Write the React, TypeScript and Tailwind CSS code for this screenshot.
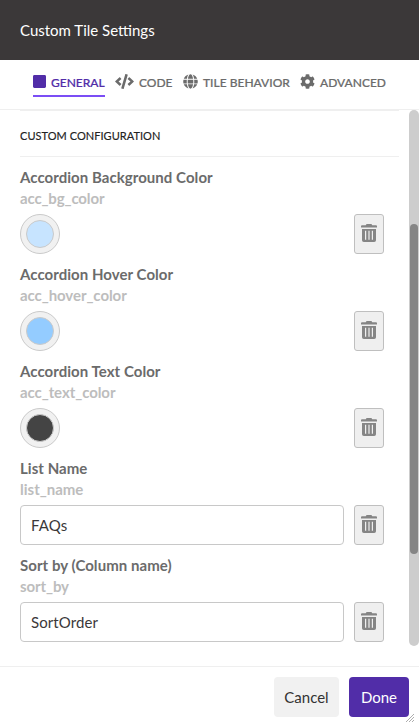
import React from "react";
import { FaCode, FaCog, FaGlobe, FaSquare } from "react-icons/fa";

type Field = { label: string; name: string; nameSpacing: string; swatch?: string; value?: string };

const fields: Field[] = [
  { label: "Accordion Background Color", name: "acc_bg_color", nameSpacing: "tracking-[-0.14px]", swatch: "bg-[#c7e4ff]" },
  { label: "Accordion Hover Color", name: "acc_hover_color", nameSpacing: "tracking-[-0.07px]", swatch: "bg-[#94ccff]" },
  { label: "Accordion Text Color", name: "acc_text_color", nameSpacing: "tracking-[-0.07px]", swatch: "bg-[#444444]" },
  { label: "List Name", name: "list_name", nameSpacing: "tracking-normal", value: "FAQs" },
  { label: "Sort by (Column name)", name: "sort_by", nameSpacing: "tracking-[-0.1px]", value: "SortOrder" },
];

const tabs = [
  { label: "GENERAL", Icon: FaSquare, size: "h-[15px] w-[13px]", width: "w-[72px]", active: true },
  { label: "CODE", Icon: FaCode, size: "h-[15px] w-[19px]", width: "w-[58px]", active: false },
  { label: "TILE BEHAVIOR", Icon: FaGlobe, size: "h-[15px] w-[15px]", width: "w-[107px]", active: false },
  { label: "ADVANCED", Icon: FaCog, size: "h-[15px] w-[15px]", width: "w-[87px]", active: false },
];

function TrashIcon() {
  return (
    <svg className="h-[18px] w-4" viewBox="0 0 16 18" fill="currentColor">
      <path d="M5.6 0h4.8l.9 1.2H15q1 0 1 1V3.4H0V2.2q0-1 1-1h3.7z" />
      <path
        fillRule="evenodd"
        d="M1 5h14v11.2q0 1.8-1.8 1.8H2.8Q1 18 1 16.2zM4 6.7v9h1.2v-9zM7.4 6.7v9h1.2v-9zM10.8 6.7v9H12v-9z"
      />
    </svg>
  );
}

function FieldRow({ field }: { field: Field }) {
  return (
    <div className="h-[97px] text-[15px] leading-[21px]">
      <div className="font-bold tracking-[0.05px] text-[#6b6b6b]">{field.label}</div>
      <div className={`font-bold text-[#bdbdbd] ${field.nameSpacing}`}>{field.name}</div>
      <div className="mt-[5px] flex h-10 items-center justify-between">
        {field.swatch ? (
          <button className="flex size-10 items-center justify-center rounded-full border border-[#cacaca] bg-[#f1f1f1]">
            <span className={`size-7 rounded-full border border-[#cacaca] ${field.swatch}`} />
          </button>
        ) : (
          <input
            className="h-10 w-[324px] rounded-[4px] border border-[#c8c8c8] bg-white px-[10px] text-[15px] tracking-[0.1px] text-[#3b3839] outline-none"
            defaultValue={field.value}
          />
        )}
        <button className="flex h-10 w-[30px] items-center justify-center rounded-[3px] border border-[#bfbfbf] bg-[#efefef] pb-[2px] text-[#858585]">
          <TrashIcon />
        </button>
      </div>
    </div>
  );
}

export default function App() {
  return (
    <div className="relative flex h-[727px] w-[419px] flex-col overflow-hidden bg-white font-['Lato',sans-serif]">
      <header className="flex h-[60px] shrink-0 items-center bg-[#3b3839] px-5 text-[15px] text-white">
        Custom Tile Settings
      </header>
      <nav className="flex h-[50px] shrink-0 items-start gap-[10px] border-b border-[#efefef] pt-[13px] pl-[33px]">
        {tabs.map(({ label, Icon, size, width, active }) => (
          <div
            key={label}
            className={`flex h-6 shrink-0 items-start gap-[5px] whitespace-nowrap border-b-2 text-[12px] leading-[20px] font-medium [-webkit-text-stroke:0.2px] ${width} ${
              active ? "border-[#7b4df5] text-[#512da8]" : "border-transparent text-[#6b6b6b]"
            }`}
          >
            <Icon className={`mt-px shrink-0 ${size}`} />
            <span>{label}</span>
          </div>
        ))}
      </nav>
      <div className="flex h-[536px] shrink-0">
        <main className="w-[409px] pr-[10px] pl-5">
          <h2 className="flex h-[47px] items-center border-y border-[#efefef] pt-[6px] text-[11px] tracking-[0.04px] text-[#222] [-webkit-text-stroke:0.15px]">
            CUSTOM CONFIGURATION
          </h2>
          <div className="pr-[15px] pt-[10px]">
            {fields.map((f) => (
              <FieldRow key={f.name} field={f} />
            ))}
          </div>
        </main>
        <div className="w-[10px] rounded-[5px] bg-[#cdcdcd] px-px pt-[114px]">
          <div className="h-[330px] rounded-[4px] bg-[#858585]" />
        </div>
      </div>
      <footer className="mt-5 flex h-[61px] shrink-0 items-start justify-end gap-[10px] border-t border-[#efefef] px-[10px] pt-[10px] text-[15px]">
        <button className="h-10 w-[65px] rounded-[4px] bg-[#f1f1f1] text-[#333]">Cancel</button>
        <button className="h-10 w-[60px] rounded-[4px] bg-[#512da8] text-white">Done</button>
      </footer>
      <svg className="absolute right-[5px] bottom-[5px] h-2 w-2 text-[#999]" viewBox="0 0 8 8" stroke="currentColor" strokeWidth="0.8">
        <path d="M0 8 8 0M3 8 8 3M6 8 8 6" />
      </svg>
    </div>
  );
}
